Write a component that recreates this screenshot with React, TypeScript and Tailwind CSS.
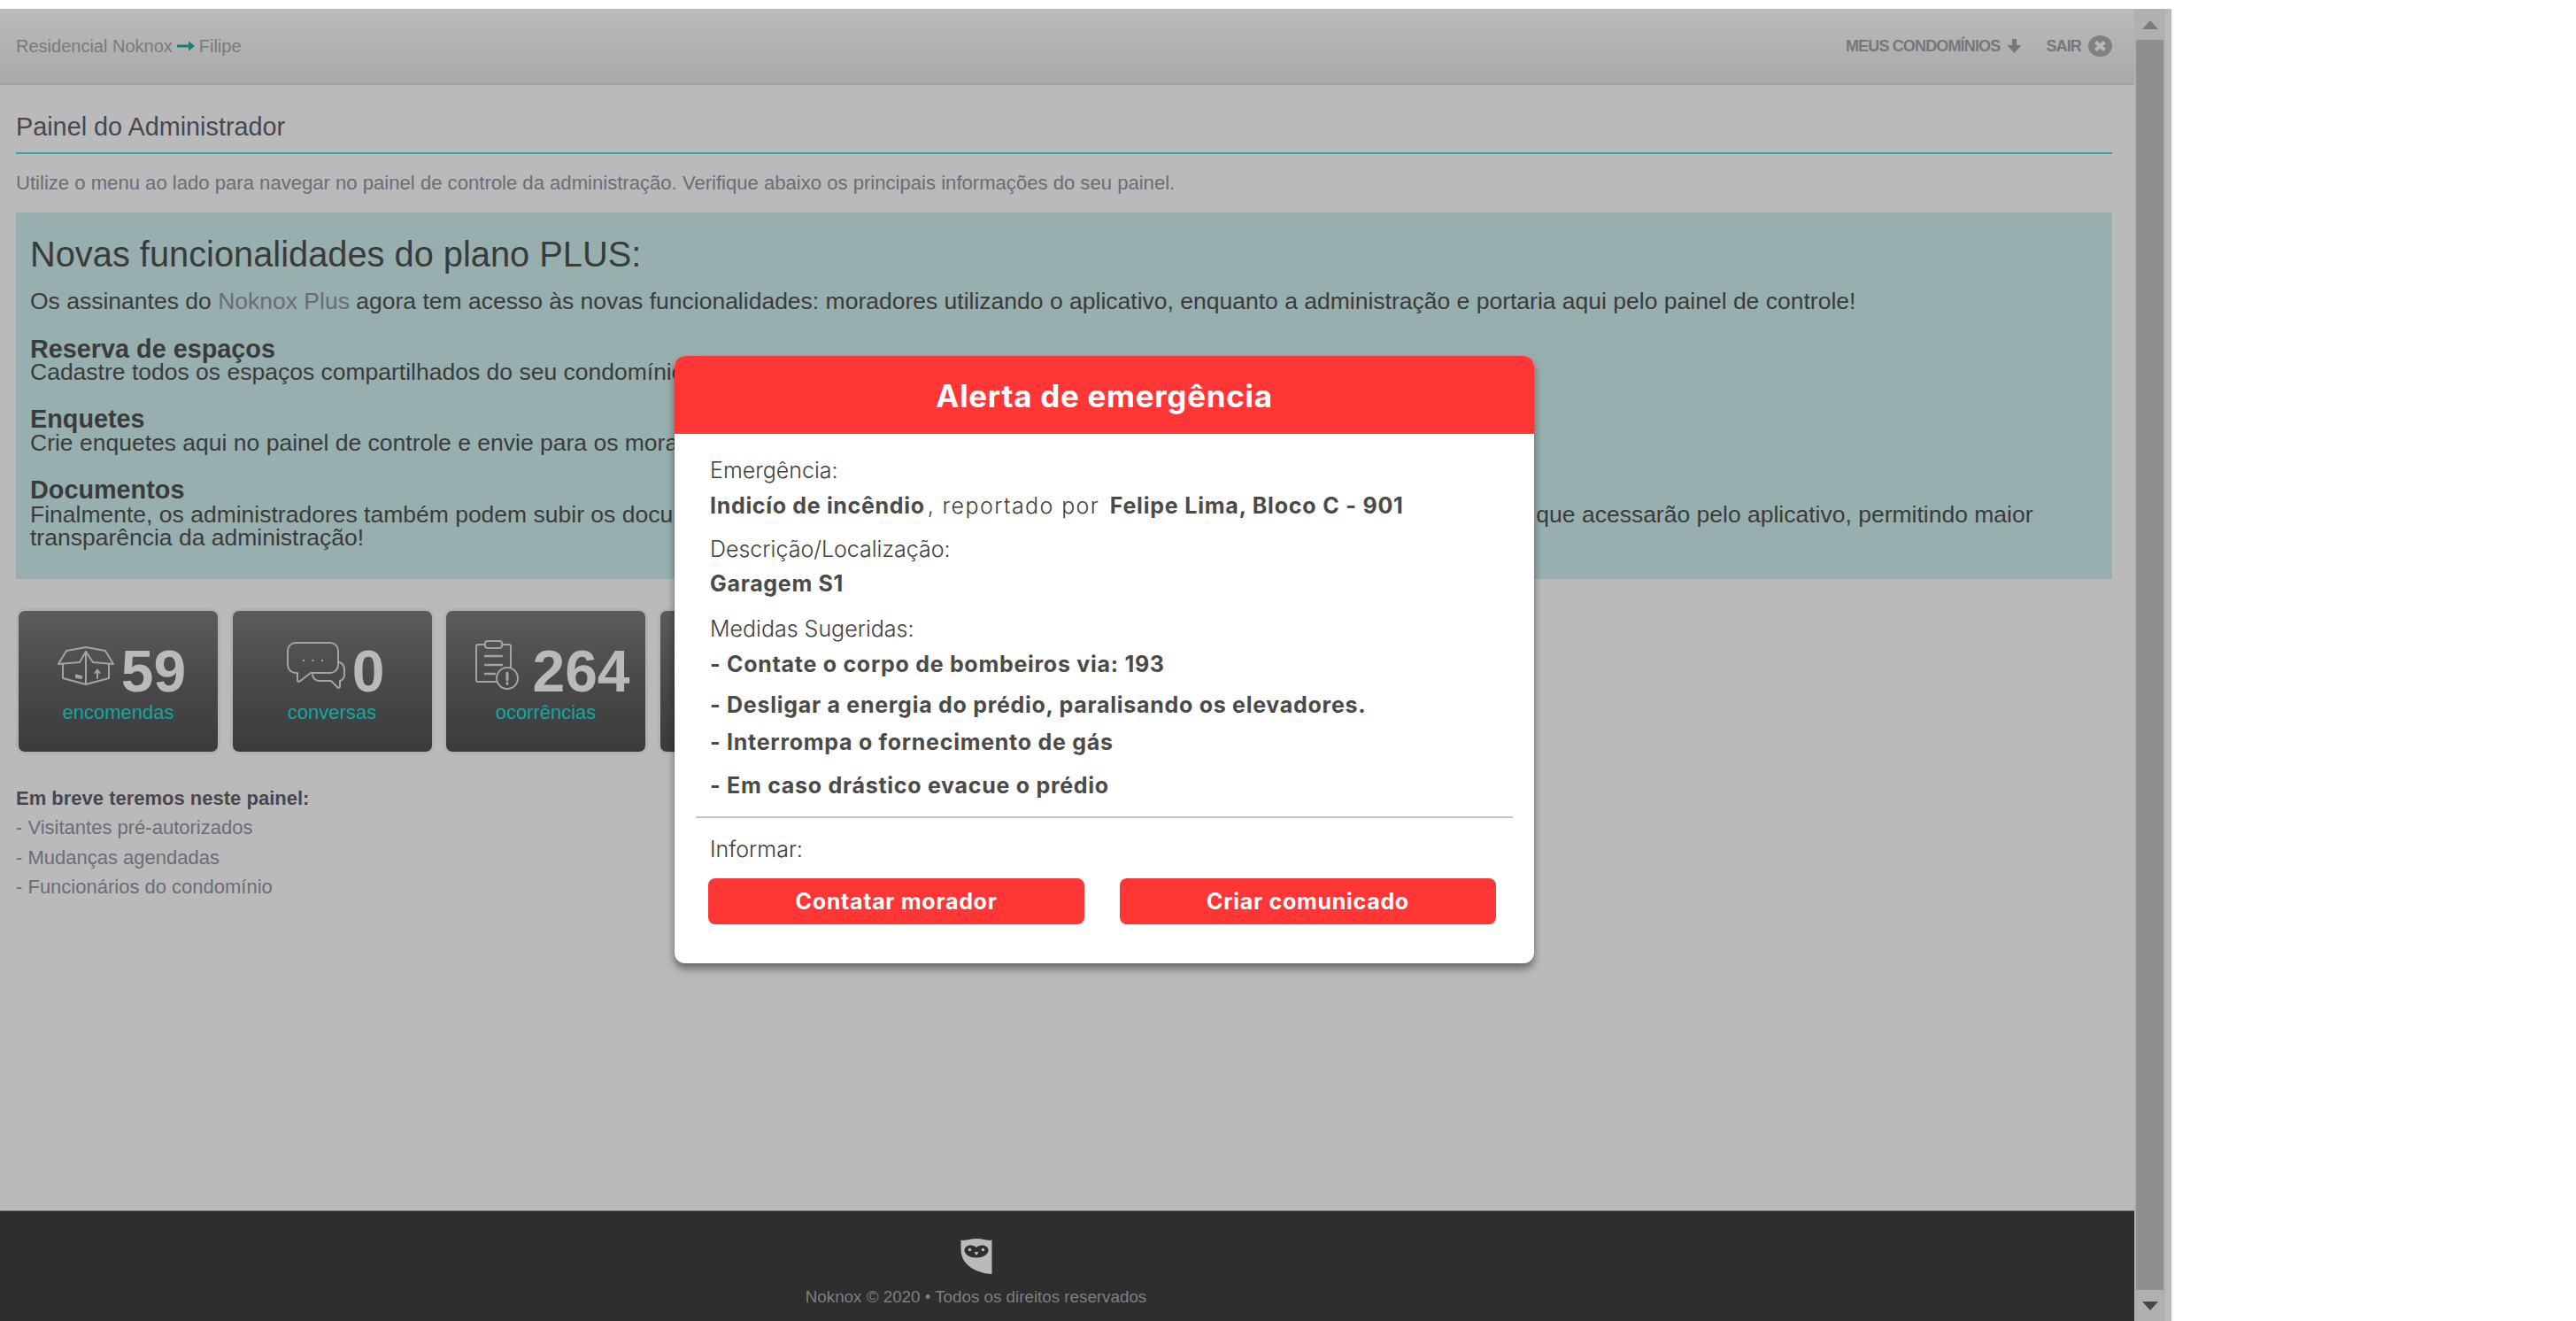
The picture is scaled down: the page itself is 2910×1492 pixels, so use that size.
import React from "react";

const Body = "font-['Liberation_Sans',Arial,sans-serif]";
const Modal = "font-['Inter','Open_Sans',sans-serif]";
const ICON = "#a3a3a3";

function BoxIcon() {
  return (
    <svg className="mb-[14px]" width="64" height="45" viewBox="0 0 64 45" fill="none" stroke={ICON} strokeWidth="2" strokeLinejoin="round" strokeLinecap="round">
      <path d="M6 21V37L32 44L58 37V21" />
      <path d="M32 7V44" />
      <path d="M1 21L10 6L32 2L54 6L63 21L40 19L32 7L25 19Z" />
      <path d="M45 37V28M42.5 31L45 27.5L47.5 31" />
      <path d="M21 33.5L27 35V37L21 36Z" fill={ICON} />
    </svg>
  );
}

function ChatIcon() {
  return (
    <svg className="mb-[14px]" width="66" height="53" viewBox="0 0 66 53" fill="none" stroke={ICON} strokeWidth="2" strokeLinejoin="round" strokeLinecap="round">
      <path d="M10 1H49A9 9 0 0 1 58 10V26A9 9 0 0 1 49 35H27L14 45L12 44V35H10A9 9 0 0 1 1 26V10A9 9 0 0 1 10 1Z" />
      <path d="M59 23C63 24 65 27 65 31V37C65 41 63 43 60 44V51L58 52L50 44H37C33 44 30 42 29 37" />
      <circle cx="19" cy="21" r="1.2" fill={ICON} stroke="none" />
      <circle cx="29.5" cy="21" r="1.2" fill={ICON} stroke="none" />
      <circle cx="40" cy="21" r="1.2" fill={ICON} stroke="none" />
    </svg>
  );
}

function ClipboardIcon() {
  return (
    <svg className="mb-[14px] mr-[7px] ml-[8px]" width="49" height="56" viewBox="0 0 49 56" fill="none" stroke={ICON} strokeWidth="2" strokeLinejoin="round" strokeLinecap="round">
      <path d="M24 47H3A2 2 0 0 1 1 45V7A2 2 0 0 1 3 5H11M30 5H38A2 2 0 0 1 40 7V31" />
      <rect x="11" y="1" width="19" height="8" rx="3" />
      <path d="M11 18H30M11 28H30M11 38H22" strokeWidth="2.4" />
      <circle cx="36" cy="43" r="12" />
      <path d="M36 37V45M36 48.5V49.5" strokeWidth="3" />
    </svg>
  );
}

function StatCard({ icon, value, label }: { icon: React.ReactNode; value: string; label: string }) {
  return (
    <div className="w-[225px] h-[127px] shrink-0 rounded-[10px] bg-gradient-to-b from-[#5b5b5b] via-[#494949] to-[#3b3b3b] border-[3px] border-[#b2b2b2] box-content -m-[3px] flex flex-col items-center pt-[32px]">
      <div className="flex items-center gap-[8px] h-[72px] ml-[8px]">
        {icon}
        <span className="text-[#bababa] text-[66px] leading-[72px] font-bold">{value}</span>
      </div>
      <span className="text-[#0fa8a2] text-[22px] leading-[26px] -mt-[2px]">{label}</span>
    </div>
  );
}

function OwlLogo() {
  return (
    <svg width="36" height="40" viewBox="0 0 36 40">
      <path d="M0.5 1.5C5 3 10 0 18 0C26 0 31 3 35.5 1.5V40C22 39.5 1 32 0.5 13Z" fill="#bababa" />
      <path d="M4.5 13C4.5 9.5 8 7.5 12 7.5C14.5 7.5 16.5 8.5 18 10C19.5 8.5 21.5 7.5 24 7.5C28 7.5 31.5 9.5 31.5 13C31.5 18 25 21.5 18 21.5C11 21.5 4.5 18 4.5 13Z" fill="#2e2e2e" />
      <circle cx="10.5" cy="12.5" r="1.8" fill="#bababa" />
      <circle cx="25.5" cy="12.5" r="1.8" fill="#bababa" />
      <path d="M15.5 15H20.5L18 19Z" fill="#bababa" />
    </svg>
  );
}

function Line({ children, cls }: { children: React.ReactNode; cls: string }) {
  return <div className={`text-[#4a4a4a] font-bold tracking-[0.72px] text-[25px] ${cls}`}>{children}</div>;
}

export default function App() {
  return (
    <div className={`${Body} w-[2910px] h-[1492px] bg-white overflow-hidden pt-[10px]`}>
      <div className="relative w-[2453px] h-[1482px] flex bg-[#bababa]">
        <div className="w-[2411px] h-full flex flex-col">
          <header className="h-[86px] shrink-0 bg-gradient-to-b from-[#bbbbbb] to-[#a9a9a9] border-b-[2px] border-[#a2a2a2] flex items-center justify-between pl-[18px] pr-[25px] text-[#7a7a7a]">
            <div className="text-[20px] flex items-center">
              Residencial Noknox
              <svg className="mx-[5px]" width="20" height="12" viewBox="0 0 20 12" fill="#10807c">
                <path d="M0 4.5H13V0.5L20 6L13 11.5V7.5H0Z" />
              </svg>
              Filipe
            </div>
            <div className="flex items-center font-bold text-[18px] text-[#777777] tracking-[-0.85px]">
              <span>MEUS CONDOMÍNIOS</span>
              <svg className="ml-[8px]" width="17" height="16" viewBox="0 0 17 16" fill="#777777">
                <path d="M6 0H11V7H16.5L8.5 16L0.5 7H6Z" />
              </svg>
              <span className="ml-[27px]">SAIR</span>
              <svg className="ml-[8px]" width="27" height="24" viewBox="0 0 27 24">
                <ellipse cx="13.5" cy="12" rx="13.5" ry="12" fill="#808080" />
                <path d="M8.5 7.5L18.5 16.5M18.5 7.5L8.5 16.5" stroke="#bababa" strokeWidth="4.2" />
              </svg>
            </div>
          </header>

          <main className="flex-1 px-[18px] pr-[25px]">
            <h1 className="text-[#47474f] text-[28.8px] leading-[36px] pt-[29px] border-b-[2px] border-[#2aa79f] h-[78px]">
              Painel do Administrador
            </h1>
            <p className="text-[#6c6c78] text-[22.1px] leading-[28px] mt-[19px]">
              Utilize o menu ao lado para navegar no painel de controle da administração. Verifique abaixo os principais informações do seu painel.
            </p>
            <section className="bg-[#97afae] mt-[19px] h-[414px] pt-[22px] px-[16px] text-[#3b3b3b] text-[26.5px] leading-[30px]">
              <h2 className="text-[39.8px] leading-[50px]">Novas funcionalidades do plano PLUS:</h2>
              <p className="mt-[13px]">
                Os assinantes do <span className="text-[#6c6c78]">Noknox Plus</span> agora tem acesso às novas funcionalidades: moradores utilizando o aplicativo, enquanto a administração e portaria aqui pelo painel de controle!
              </p>
              <div className="mt-[26px] leading-[25px]">
                <div className="font-bold text-[28.8px] leading-[27px]">Reserva de espaços</div>
                <div>Cadastre todos os espaços compartilhados do seu condomínio</div>
              </div>
              <div className="mt-[26px] leading-[25px]">
                <div className="font-bold text-[28.8px] leading-[29px]">Enquetes</div>
                <div>Crie enquetes aqui no painel de controle e envie para os moradores</div>
              </div>
              <div className="mt-[26px] leading-[26px]">
                <div className="font-bold text-[28.8px] leading-[29px]">Documentos</div>
                <div>
                  Finalmente, os administradores também podem subir os documentos do condomínio aqui pelo painel de controle, acessíveis para os moradores que acessarão pelo aplicativo, permitindo maior<br />transparência da administração!
                </div>
              </div>
            </section>

            <div className="flex gap-[16.5px] mt-[36px] ml-[3px]">
              <StatCard icon={<BoxIcon />} value="59" label="encomendas" />
              <StatCard icon={<ChatIcon />} value="0" label="conversas" />
              <StatCard icon={<ClipboardIcon />} value="264" label="ocorrências" />
              <StatCard icon={<BoxIcon />} value="12" label="comunicados" />
            </div>

            <div className="mt-[36px] text-[22px] leading-[33.3px] text-[#6c6c78]">
              <div className="font-bold text-[#47474f]">Em breve teremos neste painel:</div>
              <div>- Visitantes pré-autorizados</div>
              <div>- Mudanças agendadas</div>
              <div>- Funcionários do condomínio</div>
            </div>
          </main>

          <footer className="h-[125px] shrink-0 bg-[#2e2e2e] border-t border-[#7a7a7a] flex flex-col items-center pt-[31px] pr-[206px]">
            <OwlLogo />
            <div className="text-[#7f7f7f] text-[18.8px] leading-[24px] mt-[14px]">Noknox © 2020 • Todos os direitos reservados</div>
          </footer>
        </div>

        <div className="w-[35px] h-full bg-[#b0b0b0] flex flex-col items-center shrink-0">
          <div className="h-[35px] shrink-0 flex items-center justify-center">
            <svg width="18" height="10" viewBox="0 0 18 10" fill="#7b7b7b"><path d="M9 0L18 10H0Z" /></svg>
          </div>
          <div className="w-[31px] flex-1 bg-[#8f8f8f]" />
          <div className="h-[35px] shrink-0 flex items-center justify-center">
            <svg width="18" height="10" viewBox="0 0 18 10" fill="#474747"><path d="M0 0H18L9 10Z" /></svg>
          </div>
        </div>
        <div className="flex-1 bg-[#bababa]" />

        <div className={`${Modal} absolute left-[762px] top-[392px] w-[971px] h-[686px] bg-white rounded-[12px] shadow-[0_6px_10px_rgba(0,0,0,0.45)] overflow-hidden`}>
          <div className="h-[88px] bg-[#ff3636] flex items-center justify-center text-white font-bold text-[35px] tracking-[0.7px] pt-[2px]">
            Alerta de emergência
          </div>
          <div className="px-[40px] pt-[24px] text-[#404040] text-[25px]">
            <div className="font-light leading-[34px]">Emergência:</div>
            <div className="mt-[3.5px] leading-[38px] font-light tracking-[1.4px]">
              <span className="font-bold tracking-[0.68px] text-[#4a4a4a]">Indicío de incêndio</span><span className="ml-[3px]">, reportado por</span> <span className="font-bold ml-[3px] tracking-[0.8px] text-[#4a4a4a]">Felipe Lima, Bloco C - 901</span>
            </div>
            <div className="font-light leading-[34px] mt-[13px]">Descrição/Localização:</div>
            <div className="mt-[3px] leading-[38px] font-bold tracking-[0.68px] text-[#4a4a4a]">Garagem S1</div>
            <div className="font-light leading-[34px] mt-[15px]">Medidas Sugeridas:</div>
            <Line cls="mt-[4px] leading-[38px]">- Contate o corpo de bombeiros via: 193</Line>
            <Line cls="mt-[8px] leading-[38px]">- Desligar a energia do prédio, paralisando os elevadores.</Line>
            <Line cls="mt-[4px] leading-[38px]">- Interrompa o fornecimento de gás</Line>
            <Line cls="mt-[11px] leading-[38px]">- Em caso drástico evacue o prédio</Line>
          </div>
          <div className="mx-[24px] mt-[16px] h-[2px] bg-[#c4c4c4]" />
          <div className="px-[40px] pt-[18px] font-light text-[#3b3b3b] text-[25px] leading-[34px]">Informar:</div>
          <div className="flex justify-between pl-[38px] pr-[43px] mt-[16px]">
            <div className="w-[425px] h-[52px] rounded-[8px] bg-[#ff3636] text-white font-bold tracking-[0.7px] text-[25px] flex items-center justify-center pt-[3px]">Contatar morador</div>
            <div className="w-[425px] h-[52px] rounded-[8px] bg-[#ff3636] text-white font-bold tracking-[0.7px] text-[25px] flex items-center justify-center pt-[3px]">Criar comunicado</div>
          </div>
        </div>
      </div>
    </div>
  );
}
